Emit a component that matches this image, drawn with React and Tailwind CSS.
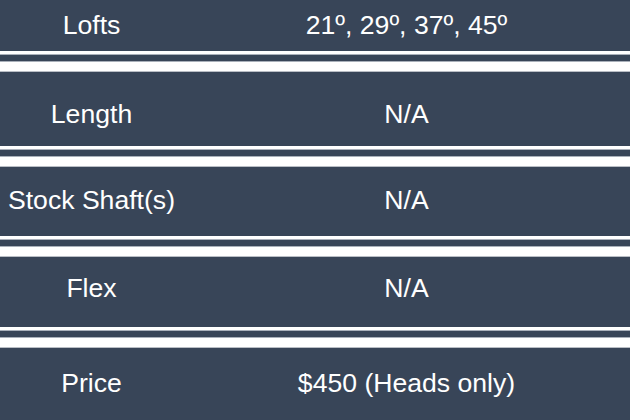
const rows = [
  { label: "Lofts", value: "21º, 29º, 37º, 45º", h: "h-[51px]", pt: "pt-[10px]" },
  { label: "Length", value: "N/A", h: "h-[74px]", pt: "pt-[27px]" },
  { label: "Stock Shaft(s)", value: "N/A", h: "h-[69px]", pt: "pt-[18px]" },
  { label: "Flex", value: "N/A", h: "h-[70px]", pt: "pt-[16px]" },
  { label: "Price", value: "$450 (Heads only)", h: "h-[72px]", pt: "pt-[20px]" },
];

function Separator() {
  return (
    <div className="flex flex-col">
      <div className="h-[3px] bg-white" />
      <div className="h-px bg-[#a9b0ba]" />
      <div className="h-[6px] bg-[#384558]" />
      <div className="h-px bg-[#a9b0ba]" />
      <div className="h-[9px] bg-white" />
      <div className="h-px bg-[#b9bec5]" />
    </div>
  );
}

function SpecRow({ label, value, h, pt }) {
  return (
    <div className={`grid grid-cols-[183px_1fr] bg-[#384558] text-white ${h} ${pt}`}>
      <div className="text-center leading-[30px] whitespace-nowrap">{label}</div>
      <div className="text-center leading-[30px] whitespace-nowrap">{value}</div>
    </div>
  );
}

export default function App() {
  return (
    <div className="w-[630px] h-[420px] overflow-hidden bg-[#384558] font-['Liberation_Sans',Arial,sans-serif] text-[26.6px]">
      {rows.map((r, i) => (
        <div key={r.label}>
          <SpecRow {...r} />
          {i < rows.length - 1 && <Separator />}
        </div>
      ))}
    </div>
  );
}
